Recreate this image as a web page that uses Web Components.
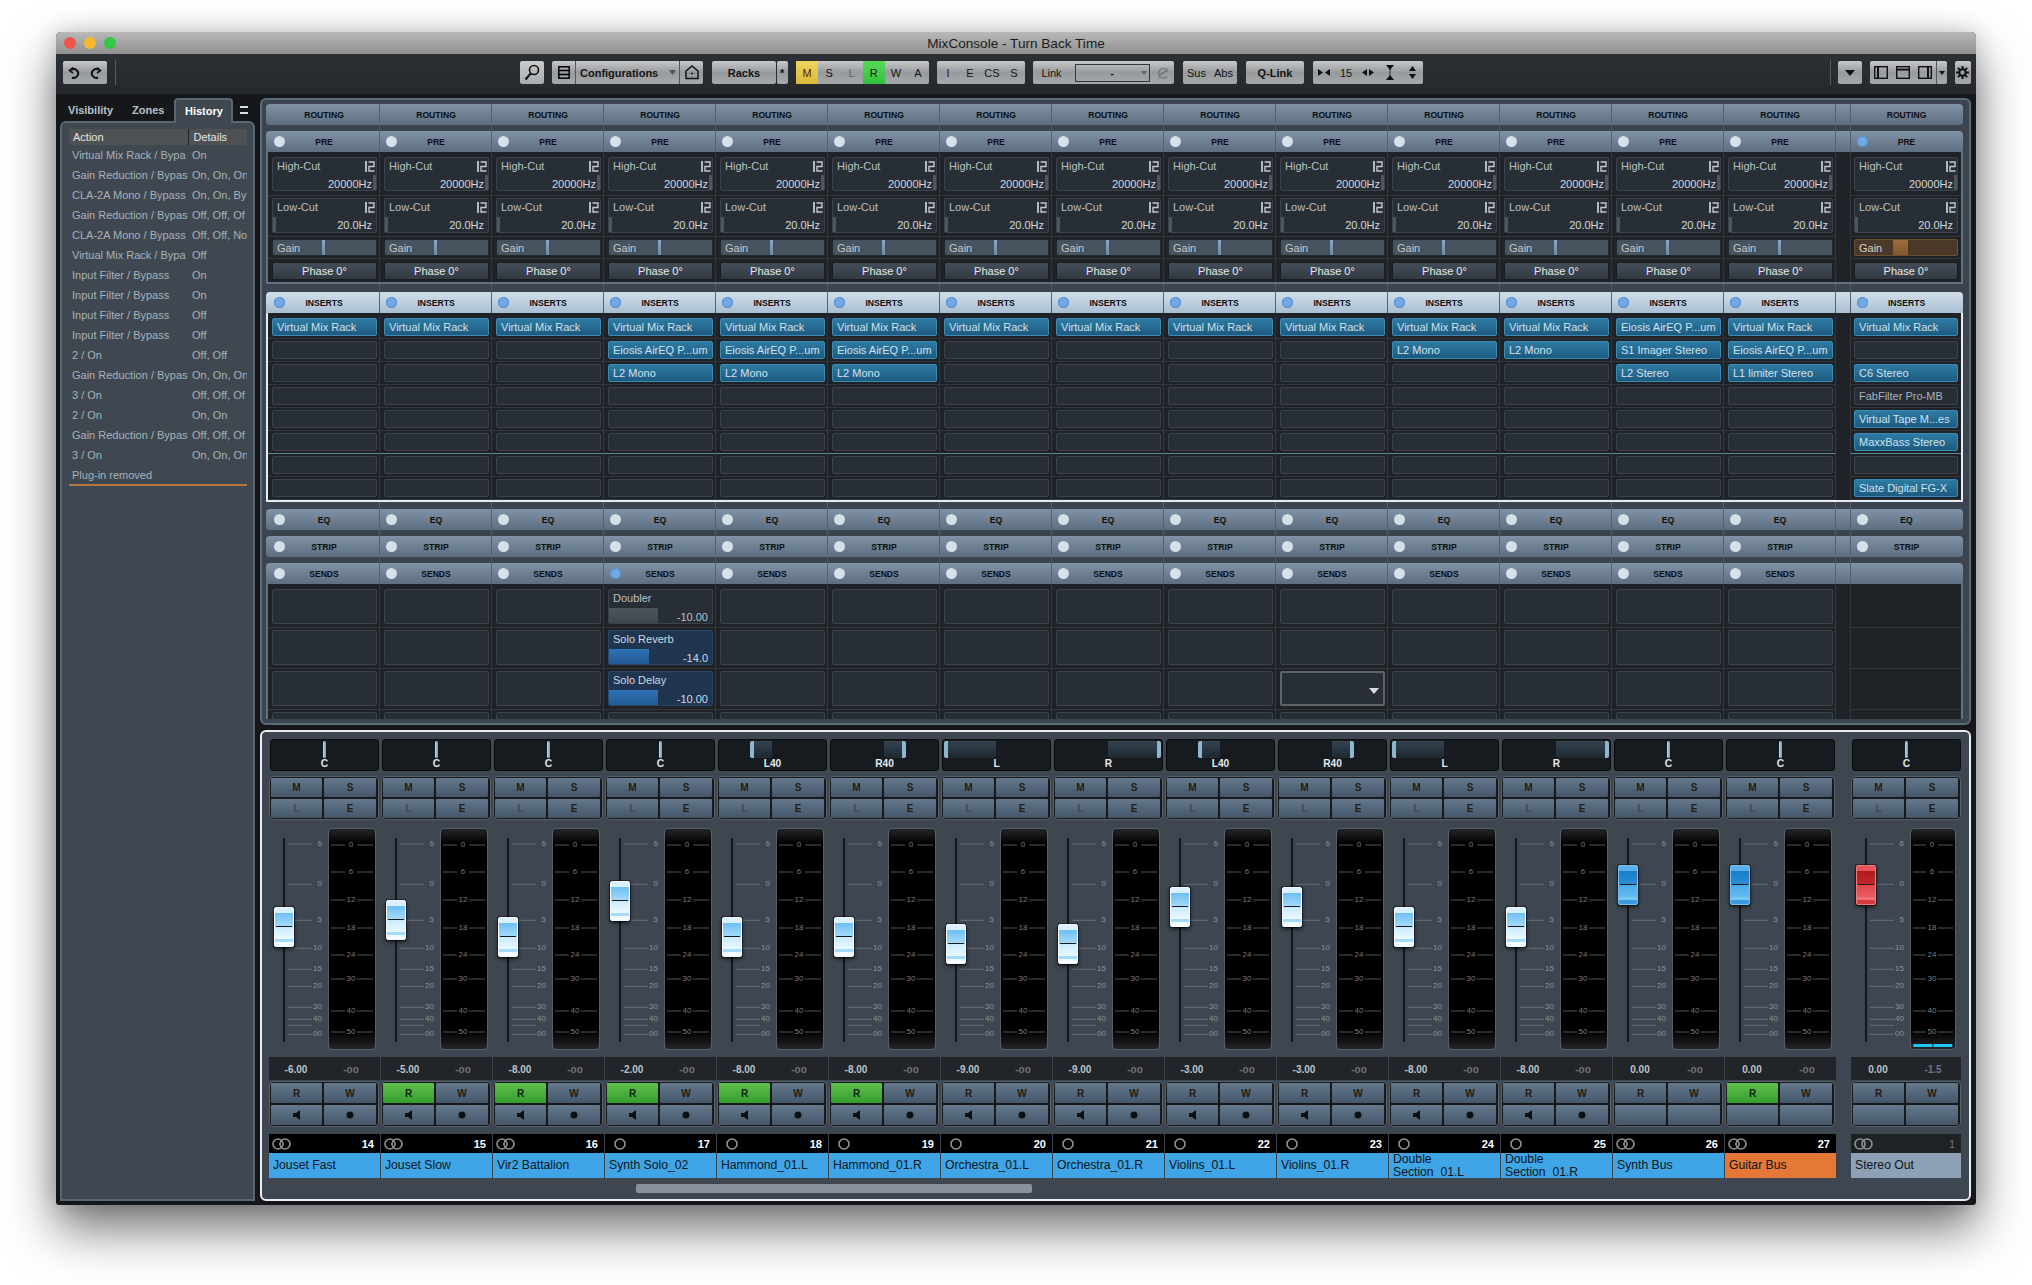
<!DOCTYPE html>
<html>
<head>
<meta charset="utf-8">
<title>MixConsole - Turn Back Time</title>
<style>
  html, body { margin: 0; height: 100%; background: #fff; overflow: hidden; }
  body { font-family: "Liberation Sans", Arial, sans-serif; padding: 32px 0 0 56px; box-sizing: border-box; }
</style>
</head>
<body>
<mix-window>
  <title-bar slot="title">MixConsole - Turn Back Time</title-bar>
  <mix-toolbar slot="toolbar"></mix-toolbar>
  <history-panel slot="side"></history-panel>
  <rack-console slot="console"></rack-console>
  <fader-console slot="console"></fader-console>
</mix-window>

<script>
const COLS = 'repeat(14, 112px) 14px 111px';

class MixWindow extends HTMLElement {
  constructor() {
    super();
    this.attachShadow({ mode: 'open' }).innerHTML = `
      <style>
        :host { display: block; width: 1920px; height: 1173px; background: #15171a; border-radius: 5px 5px 3px 3px;
                box-shadow: 0 24px 50px rgba(0,0,0,.55), 0 0 22px rgba(0,0,0,.16); }
        .main { display: flex; padding-top: 4px; }
        .side { margin-left: 4px; width: 195px; flex: none; }
        .console { margin-left: 5px; width: 1711px; flex: none; display: flex; flex-direction: column; gap: 5px; }
      </style>
      <slot name="title"></slot>
      <slot name="toolbar"></slot>
      <div class="main">
        <div class="side"><slot name="side"></slot></div>
        <div class="console"><slot name="console"></slot></div>
      </div>`;
  }
}

class TitleBar extends HTMLElement {
  constructor() {
    super();
    this.attachShadow({ mode: 'open' }).innerHTML = `
      <style>
        :host { display: flex; position: relative; height: 22px; align-items: center; justify-content: center;
                background: linear-gradient(#b9bab8, #8f908f); border-radius: 5px 5px 0 0;
                font-size: 13.6px; color: #1b1b1b; }
        .lights { position: absolute; left: 8px; top: 5px; display: flex; gap: 8px; }
        .lights i { width: 12px; height: 12px; border-radius: 50%; }
      </style>
      <div class="lights">
        <i style="background:#f0544c"></i><i style="background:#f5b82e"></i><i style="background:#33c748"></i>
      </div>
      <slot></slot>`;
  }
}

class MixToolbar extends HTMLElement {
  constructor() {
    super();
    const arrow = '<svg width="7" height="5" viewBox="0 0 7 5"><path d="M0 0h7L3.5 5z" fill="#555"/></svg>';
    this.attachShadow({ mode: 'open' }).innerHTML = `
      <style>
        :host { display: flex; height: 40px; box-sizing: border-box; padding-top: 7px; align-items: flex-start;
                background: linear-gradient(#2b3035, #25292d); font-size: 11px; color: #141414; }
        .g { display: flex; height: 23px; align-items: center; flex: none; border-radius: 2px;
             background: linear-gradient(#c6c8ca, #989b9e 50%, #a6a9ab); }
        .g > span { display: flex; align-items: center; justify-content: center; height: 100%; flex: none; }
        .b { font-weight: bold; }
        .div { width: 1px; height: 25px; margin-top: -1px; background: #555b60; flex: none; }
        .dim { color: #5f6164; }
        .sep { border-left: 1px solid #55585b; box-sizing: border-box; }
        .field { width: 75px; height: 18px; box-sizing: border-box; margin-left: 8px; border: 1px solid #33363a;
                 display: flex; align-items: center; justify-content: center; position: relative; font-weight: bold; flex: none; }
        .field svg { position: absolute; right: 2px; top: 6px; }
      </style>
      <div class="g" style="margin-left:6.5px;width:44.5px">
        <span style="width:22px"><svg width="14" height="14" viewBox="0 0 14 14" fill="none" stroke="#111" stroke-width="2"><path d="M5 11.5a4.4 4.4 0 1 0-1-7.5"/><path d="M6 1.5 2.5 4.5 6 7" stroke-width="1.6"/></svg></span>
        <span style="width:22px"><svg width="14" height="14" viewBox="0 0 14 14" fill="none" stroke="#111" stroke-width="2"><path d="M9 11.5a4.4 4.4 0 1 1 1-7.5"/><path d="M8 1.5 11.5 4.5 8 7" stroke-width="1.6"/></svg></span>
      </div>
      <div class="div" style="margin-left:8px"></div>
      <div class="g" style="margin-left:404px;width:24px;background:linear-gradient(#c9cbcd,#a9acae)">
        <span style="width:24px"><svg width="16" height="17" viewBox="0 0 16 17" fill="none" stroke="#111"><circle cx="10" cy="6" r="4.5" stroke-width="1.6"/><path d="M6.6 9.6 1.5 15.5" stroke-width="2.2"/></svg></span>
      </div>
      <div class="g" style="margin-left:8px;width:151px">
        <span style="width:23px"><svg width="12" height="13" viewBox="0 0 12 13" fill="none" stroke="#000" stroke-width="1.5"><rect x=".8" y=".8" width="10.4" height="11.4"/><path d="M1 4.5h10M1 8.5h10"/></svg></span>
        <span class="b sep" style="width:104px;justify-content:flex-start;padding-left:4px">Configurations<span style="margin-left:auto;margin-right:3px;display:flex">${arrow}</span></span>
        <span class="sep" style="width:24px"><svg width="14" height="15" viewBox="0 0 14 15" fill="none" stroke="#111" stroke-width="1.5"><path d="M1 13.5V6l6-5 6 5v7.5z"/><circle cx="7" cy="8.5" r="1" fill="#111" stroke="none"/><path d="M4 8.5h.6M9.4 8.5h.6M7 11.5v.6" stroke-width="1"/></svg></span>
      </div>
      <div class="g b" style="margin-left:9px;width:64px"><span style="width:64px">Racks</span></div>
      <div class="g b" style="margin-left:1px;width:10.5px"><span style="width:10.5px">*</span></div>
      <div class="g" style="margin-left:8.5px;width:133px">
        <span style="width:22.2px;background:linear-gradient(#edd45e,#d9b93a);color:#5a1a00">M</span>
        <span style="width:22.2px">S</span>
        <span style="width:22.2px" class="dim">L</span>
        <span style="width:22.2px;background:linear-gradient(#58d858,#32c23c)">R</span>
        <span style="width:22.2px">W</span>
        <span style="width:22px">A</span>
      </div>
      <div class="g" style="margin-left:8px;width:88px">
        <span style="width:22px">I</span><span style="width:22px">E</span><span style="width:22px">CS</span><span style="width:22px">S</span>
      </div>
      <div class="g" style="margin-left:8px;width:141px">
        <span style="width:37px;margin-right:-3.5px">Link</span>
        <div class="field">-<svg width="6" height="4" viewBox="0 0 6 4"><path d="M0 0h6L3 4z" fill="#666"/></svg></div>
        <span style="width:26px"><svg width="14" height="14" viewBox="0 0 14 14" fill="none" stroke="#77797c" stroke-width="1.4"><path d="M2.5 8.6 11.6 5a4.8 4.8 0 1 0-.6 5.5"/><path d="M2 13 12.5 1" stroke-width="1"/></svg></span>
      </div>
      <div class="g" style="margin-left:9px;width:54px">
        <span style="width:27px">Sus</span><span style="width:27px">Abs</span>
      </div>
      <div class="g b" style="margin-left:9px;width:58px"><span style="width:58px">Q-Link</span></div>
      <div class="g" style="margin-left:9px;width:110px">
        <span style="width:22px"><svg width="12" height="7" viewBox="0 0 12 7" fill="#111"><path d="M0 0l5 3.5L0 7zM12 0 7 3.5 12 7z"/></svg></span>
        <span style="width:22px">15</span>
        <span style="width:22px"><svg width="12" height="7" viewBox="0 0 12 7" fill="#111"><path d="M5 0 0 3.5 5 7zM7 0l5 3.5L7 7z"/></svg></span>
        <span style="width:22px"><svg width="8" height="15" viewBox="0 0 8 15" fill="#111"><path d="M0 0h8L4 5zM0 15h8l-4-5z"/><path d="M3.6 4h.8v7h-.8z"/></svg></span>
        <span style="width:22px"><svg width="7" height="13" viewBox="0 0 7 13" fill="#111"><path d="M3.5 0 7 5H0zM3.5 13 0 8h7z"/></svg></span>
      </div>
      <div class="div" style="margin-left:406.6px"></div>
      <div class="g" style="margin-left:7px;width:24px"><span style="width:24px"><svg width="10" height="6" viewBox="0 0 10 6"><path d="M0 0h10L5 6z" fill="#111"/></svg></span></div>
      <div class="g" style="margin-left:8px;width:77px">
        <span style="width:22px"><svg width="14" height="13" viewBox="0 0 14 13" fill="none" stroke="#111" stroke-width="1.4"><rect x=".7" y=".7" width="12.6" height="11.6"/><path d="M4 1v11" stroke-width="2"/></svg></span>
        <span style="width:22px"><svg width="14" height="13" viewBox="0 0 14 13" fill="none" stroke="#111" stroke-width="1.4"><rect x=".7" y=".7" width="12.6" height="11.6"/><path d="M1 3.6h12" stroke-width="2"/></svg></span>
        <span style="width:22px"><svg width="14" height="13" viewBox="0 0 14 13" fill="none" stroke="#111" stroke-width="1.4"><rect x=".7" y=".7" width="12.6" height="11.6"/><path d="M10 1v11" stroke-width="2"/></svg></span>
        <span class="sep" style="width:11px"><svg width="6" height="4" viewBox="0 0 6 4"><path d="M0 0h6L3 4z" fill="#111"/></svg></span>
      </div>
      <div class="g" style="margin-left:8.5px;width:15.5px"><span style="width:15.5px"><svg width="13" height="13" viewBox="0 0 13 13" fill="none" stroke="#111"><circle cx="6.5" cy="6.5" r="3.2" stroke-width="2"/><path d="M6.5 0v3M6.5 10v3M0 6.5h3M10 6.5h3M1.9 1.9 4 4M9 9l2.1 2.1M1.9 11.1 4 9M9 4l2.1-2.1" stroke-width="2"/></svg></span></div>`;
  }
}

class HistoryPanel extends HTMLElement {
  constructor() {
    super();
    // the two columns are clipped in the window, so only what shows is listed
    const rows = [
      ['Virtual Mix Rack / Bypa', 'On'], ['Gain Reduction / Bypas', 'On, On, On'],
      ['CLA-2A Mono / Bypass', 'On, On, By'], ['Gain Reduction / Bypas', 'Off, Off, Of'],
      ['CLA-2A Mono / Bypass', 'Off, Off, No'], ['Virtual Mix Rack / Bypa', 'Off'],
      ['Input Filter / Bypass', 'On'], ['Input Filter / Bypass', 'On'],
      ['Input Filter / Bypass', 'Off'], ['Input Filter / Bypass', 'Off'],
      ['2 / On', 'Off, Off'], ['Gain Reduction / Bypas', 'On, On, On'],
      ['3 / On', 'Off, Off, Of'], ['2 / On', 'On, On'],
      ['Gain Reduction / Bypas', 'Off, Off, Of'], ['3 / On', 'On, On, On'],
      ['Plug-in removed', '']
    ];
    const html = rows.map(r => `<div class="row"><span>${r[0]}</span><span>${r[1]}</span></div>`).join('');
    this.attachShadow({ mode: 'open' }).innerHTML = `
      <style>
        :host { display: block; font-size: 11px; color: #a9b1b9; }
        .tabs { display: flex; height: 23px; align-items: center; font-weight: bold; color: #b9c1c8; position: relative; z-index: 1; }
        .tabs span { flex: none; }
        .hist { width: 59px; height: 25px; margin: 0 0 -2px 10px; padding-bottom: 2px; align-self: flex-start; box-sizing: border-box; background: #3f4851; color: #fff;
                border: 2px solid #5a6670; border-bottom: 0; border-radius: 4px 4px 0 0; display: flex; align-items: center; justify-content: center; }
        .menu { width: 8px; height: 4px; margin-left: 7px; border: solid #d8dde1; border-width: 2px 0; }
        .panel { height: 1080px; box-sizing: border-box; background: #3f4851; border: 2px solid #5a6670; border-radius: 6px 6px 0 0; padding: 6px 6px 0 7px; }
        .head { display: grid; grid-template-columns: 118.5px 1fr; height: 16px; background: #4f5254; color: #e6e6e6; align-items: center; }
        .head span { padding-left: 4px; height: 100%; display: flex; align-items: center; }
        .head span + span { border-left: 1.5px solid #22262a; padding-left: 5px; }
        .row { display: grid; grid-template-columns: 120px 58px; height: 20px; align-items: center; white-space: nowrap; }
        .row span { overflow: hidden; padding-left: 3px; }
        .end { height: 2px; margin-top: -1px; background: #b3793f; }
      </style>
      <div class="tabs">
        <span style="margin-left:8px">Visibility</span>
        <span style="margin-left:19px">Zones</span>
        <span class="hist">History</span>
        <span class="menu"></span>
      </div>
      <div class="panel">
        <div class="head"><span>Action</span><span>Details</span></div>
        ${html}
        <div class="end"></div>
      </div>`;
  }
}

class RackCell extends HTMLElement {
  constructor() {
    super();
    this.attachShadow({ mode: 'open' }).innerHTML = `
      <style>
        :host { display: block; box-sizing: border-box; padding: var(--t, 2px) 2px var(--b, 2px) 4px;
                border-right: 1px solid #31373d; border-bottom: 1px solid var(--sep, #31373d); min-width: 0; }
        :host([out]) { grid-column: 16; padding-left: 3px; padding-right: 3px; border-right: 0; border-left: 1px solid #31373d; }
      </style>
      <slot></slot>`;
  }
}

class RackSection extends HTMLElement {
  connectedCallback() {
    const a = n => this.getAttribute(n);
    const label = a('label');
    const leds = a('led');
    const active = (a('active') || '').split(',');
    let head = '';
    let rail = '';
    for (let i = 0; i < 15; i++) {
      const out = i === 14;
      const on = active.includes(String(i)) ? ' on' : '';
      const led = leds !== null && !(out && a('noout') !== null) ? `<i class="led${on}"></i>` : '';
      const txt = out && a('noout') !== null ? '' : label;
      head += `<div class="hc${out ? ' o' : ''}">${led}<b>${txt}</b></div>`;
      rail += `<div class="rc${out ? ' o' : ''}"></div>`;
    }
    const hasBody = this.children.length > 0;
    this.attachShadow({ mode: 'open' }).innerHTML = `
      <style>
        :host { display: block; font-size: 11px; }
        .rail, .head, .body { display: grid; grid-template-columns: ${COLS}; }
        .rail { height: ${a('gap') || 0}px; padding: 0 2px; }
        .rc { border-right: 1px solid #505b66; }
        .rc.o { grid-column: 16; border-right: 0; border-left: 1px solid #505b66; }
        .head { height: 21px; padding: 0 2px; border-radius: ${hasBody ? '4px 4px 0 0' : '4px'};
                background: ${a('tone') === 'light' ? 'linear-gradient(#d2deea,#aabfd3)' : 'linear-gradient(#8092a5,#5d6e80)'}; }
        .hc { position: relative; display: flex; align-items: center; justify-content: center; border-right: 1px solid #53616f; padding-left: 1px; }
        .hc.o { grid-column: 16; border-right: 0; border-left: 1px solid #53616f; }
        .hc b { font-size: 8.6px; color: #0b0d10; }
        .led { position: absolute; left: 6px; top: 4.5px; width: 11px; height: 11px; border-radius: 50%; background: #d6e0e9; }
        .led.on { background: #6fa9e8; box-shadow: inset 0 0 0 1px #5c8fc6; }
        .body { background: #1f2327; border: solid ${a('rim') || '#62727f'}; border-width: 0 2px 2px; ${a('bodystyle') || ''} }
      </style>
      <div class="rail">${a('gap') ? rail : ''}</div>
      <div class="head">${head}</div>
      ${hasBody ? '<div class="body"><slot></slot></div>' : ''}`;
  }
}

class FilterBox extends HTMLElement {
  connectedCallback() {
    const low = this.getAttribute('kind') === 'low';
    const pos = low ? 'left' : 'right';
    this.attachShadow({ mode: 'open' }).innerHTML = `
      <style>
        :host { display: flex; flex-direction: column; justify-content: space-between; box-sizing: border-box;
                height: ${low ? 35 : 34}px; border: 1px solid #3b444e; border-radius: 2px; padding: 2px 4px ${low ? 1 : 0}px 4px; color: #b9c0c7;
                background: linear-gradient(#4b5661, #4b5661) no-repeat ${pos} bottom / 3px 15px, #282e36; }
        .top { display: flex; justify-content: space-between; align-items: center; }
        .top svg { margin-right: -3px; }
        .v { text-align: right; color: #d3d8dc; }
      </style>
      <div class="top"><span>${low ? 'Low-Cut' : 'High-Cut'}</span>
        <svg width="10" height="11" viewBox="0 0 10 11" fill="none" stroke="#c2c9cf" stroke-width="1.4"><path d="M1 0v11" stroke-width="1.8"/><path d="M3.5 1H9v4.5H4V10h5.5"/></svg></div>
      <div class="v">${low ? '20.0Hz' : '20000Hz'}</div>`;
  }
}

class GainBox extends HTMLElement {
  connectedCallback() {
    const hot = this.hasAttribute('hot');
    this.attachShadow({ mode: 'open' }).innerHTML = `
      <style>
        :host { display: flex; align-items: center; box-sizing: border-box; height: 17px; padding-left: 4px;
                border: 1px solid ${hot ? '#6b4f32' : '#22282e'}; border-radius: 2px; color: ${hot ? '#d9d2c8' : '#c0c7ce'};
                background: ${hot
                  ? 'linear-gradient(#9c6c3a,#85592e) no-repeat 38px 0 / 15px 100%, #4a3829'
                  : 'linear-gradient(#84a6c0,#6c8ea8) no-repeat 49px 0 / 3px 100%, #47535e'}; }
      </style><span>Gain</span>`;
  }
}

class PhaseBox extends HTMLElement {
  constructor() {
    super();
    this.attachShadow({ mode: 'open' }).innerHTML = `
      <style>
        :host { display: flex; align-items: center; justify-content: center; height: 18px; border-radius: 2px; color: #e6eaee;
                box-sizing: border-box; border: 1px solid #191c1f; background: linear-gradient(#434d58, #323a43); }
      </style><span>Phase 0°</span>`;
  }
}

class InsertSlot extends HTMLElement {
  connectedCallback() {
    const on = this.hasAttribute('on');
    this.attachShadow({ mode: 'open' }).innerHTML = `
      <style>
        :host { display: flex; align-items: center; box-sizing: border-box; height: 18px; padding-left: 4px; border-radius: 2px;
                white-space: nowrap; overflow: hidden; border: 1px solid ${on ? '#3a8ab4' : '#3b444e'};
                color: ${on ? '#cfe2ee' : '#aab2ba'};
                background: ${on ? 'linear-gradient(#2e7ba3,#1d5a80)' : '#282e36'}; }
      </style><slot></slot>`;
  }
}

class SendSlot extends HTMLElement {
  connectedCallback() {
    const a = n => this.getAttribute(n);
    const fill = a('fill');
    const blue = a('tone') === 'blue';
    const bg = !fill ? '#282e36' : blue
      ? `linear-gradient(#2f72b6,#235a94) no-repeat left bottom / ${fill}px 15px, #1f3550`
      : `linear-gradient(#4d555d,#3d454d) no-repeat left bottom / ${fill}px 15px, #282e36`;
    const selected = this.hasAttribute('selected');
    this.attachShadow({ mode: 'open' }).innerHTML = `
      <style>
        :host { display: flex; flex-direction: column; justify-content: space-between; box-sizing: border-box; height: 35px;
                border: ${selected ? '2px solid #5d656b' : `1px solid ${blue ? '#2b4767' : '#3b444e'}`}; border-radius: 2px;
                padding: 2px 4px 0 4px; color: ${blue ? '#cfd9e2' : '#b9c0c7'}; background: ${bg}; position: relative; }
        .v { text-align: right; }
        svg { position: absolute; right: 4px; top: 15px; }
      </style>
      <div>${a('name') || ''}</div><div class="v">${a('value') || ''}</div>
      ${selected ? '<svg width="10" height="6" viewBox="0 0 10 6"><path d="M0 0h10L5 6z" fill="#d8dadc"/></svg>' : ''}`;
  }
}

class RackConsole extends HTMLElement {
  constructor() {
    super();
    const VMR = 'Virtual Mix Rack', AIR = 'Eiosis AirEQ P...um', L2 = 'L2 Mono';
    const inserts = [
      [VMR], [VMR], [VMR], [VMR, AIR, L2], [VMR, AIR, L2], [VMR, AIR, L2], [VMR], [VMR], [VMR], [VMR],
      [VMR, L2], [VMR, L2], [AIR, 'S1 Imager Stereo', 'L2 Stereo'], [VMR, AIR, 'L1 limiter Stereo'],
      [VMR, '', 'C6 Stereo', '-FabFilter Pro-MB', 'Virtual Tape M...es', 'MaxxBass Stereo', '', 'Slate Digital FG-X']
    ];
    const row = (fn, t, b, extra = () => '') => {
      let s = '';
      for (let i = 0; i < 15; i++) {
        s += `<rack-cell ${i === 14 ? 'out' : ''} style="--t:${t}px;--b:${b}px;${extra(i)}">${fn(i)}</rack-cell>`;
      }
      return s;
    };
    const preBody = row(() => '<filter-box></filter-box>', 5, 4)
      + row(() => '<filter-box kind="low"></filter-box>', 2, 3)
      + row(i => `<gain-box ${i === 14 ? 'hot' : ''}></gain-box>`, 2, 2)
      + row(() => '<phase-box></phase-box>', 3, 1, () => '--sep:transparent');
    let insBody = '';
    for (let r = 0; r < 8; r++) {
      insBody += row(i => {
        const v = inserts[i][r] || '';
        if (v[0] === '-') return `<insert-slot>${v.slice(1)}</insert-slot>`;
        return v ? `<insert-slot on>${v}</insert-slot>` : '<insert-slot></insert-slot>';
      }, 2, 2, () => r === 5 ? '--sep:#5b8a99' : '');
    }
    const sends = (r, t, b) => row(i => {
      if (i === 14) return '';
      if (i === 3 && r === 0) return '<send-slot name="Doubler" value="-10.00" fill="49"></send-slot>';
      if (i === 3 && r === 1) return '<send-slot name="Solo Reverb" value="-14.0" fill="40" tone="blue"></send-slot>';
      if (i === 3 && r === 2) return '<send-slot name="Solo Delay" value="-10.00" fill="49" tone="blue"></send-slot>';
      if (i === 9 && r === 2) return '<send-slot selected></send-slot>';
      return '<send-slot></send-slot>';
    }, t, b);
    this.attachShadow({ mode: 'open' }).innerHTML = `
      <style>
        :host { display: block; height: 627px; box-sizing: border-box; background: #3c454f; border: 2px solid #5c6b78;
                border-radius: 6px; padding: 4px 6px 4px 4px; overflow: hidden; }
      </style>
      <rack-section label="ROUTING"></rack-section>
      <rack-section label="PRE" led active="14" gap="6">${preBody}</rack-section>
      <rack-section label="INSERTS" led tone="light" active="0,1,2,3,4,5,6,7,8,9,10,11,12,13,14" gap="8" rim="#e4ebf2" bodystyle="padding-top:3px">${insBody}</rack-section>
      <rack-section label="EQ" led gap="7"></rack-section>
      <rack-section label="STRIP" led gap="6"></rack-section>
      <rack-section label="SENDS" led noout active="3" gap="6" bodystyle="border-bottom:0;height:135px;overflow:hidden;grid-auto-rows:max-content">
        ${sends(0, 5, 3)}${sends(1, 2, 3)}${sends(2, 2, 3)}${sends(3, 2, 0)}
      </rack-section>`;
  }
}

class PanBox extends HTMLElement {
  connectedCallback() {
    const label = this.getAttribute('label');
    const spec = {
      C:   [51.5, 3.5, ''],
      L40: [31, 22, 'border-left:4px solid #8fb6cf'],
      R40: [53, 22, 'border-right:4px solid #8fb6cf'],
      L:   [1, 52, 'border-left:4px solid #8fb6cf'],
      R:   [53, 53, 'border-right:4px solid #8fb6cf']
    }[label];
    const fill = label === 'C' ? 'linear-gradient(90deg,#c0d9e8,#6f9ab6)' : 'linear-gradient(#33434f,#1d2830)';
    this.attachShadow({ mode: 'open' }).innerHTML = `
      <style>
        :host { display: block; box-sizing: border-box; width: 109px; height: 32px; margin-left: 1px; background: #171b1f;
                border: 1px solid #0b0c0d; border-radius: 3px; color: #e3e9ee; }
        .t { height: 17px; margin: 1px 0 0 ${spec[0]}px; width: ${spec[1]}px; box-sizing: border-box; border-radius: 2px; background: ${fill}; ${spec[2]} }
        .l { text-align: center; font-size: 10.2px; font-weight: bold; line-height: 12px; }
      </style>
      <div class="t"></div><div class="l">${label}</div>`;
  }
}

class BtnQuad extends HTMLElement {
  connectedCallback() {
    const h = this.getAttribute('h') || 19;
    const labels = this.getAttribute('labels').split(',');
    const green = this.hasAttribute('green');
    const cells = labels.map((t, i) => {
      let c = i === 0 && green ? 'c g' : 'c';
      if (t === 'L') c += ' dim';
      let body = t;
      if (t === 'spk') body = '<svg width="7" height="10" viewBox="0 0 7 10"><path d="M0 3h3l4-3v10L3 7H0z" fill="#0e0f10"/></svg>';
      if (t === 'dot') body = '<svg width="8" height="8" viewBox="0 0 8 8"><circle cx="4" cy="4" r="3.5" fill="#0e0f10"/></svg>';
      if (t === '-') body = '';
      return `<div class="${c}">${body}</div>`;
    }).join('');
    this.attachShadow({ mode: 'open' }).innerHTML = `
      <style>
        :host { display: grid; grid-template-columns: 51px 52px; grid-auto-rows: ${h}px; gap: 2px; box-sizing: border-box; width: 110px;
                padding: 1px 1px 1px 1px; border: 1px solid #566069; border-radius: 5px; background: #17191c; }
        .c { display: flex; align-items: center; justify-content: center; font-size: 10px; font-weight: bold; color: #241b12;
             background: linear-gradient(#65788c, #455669); border-radius: 1px; }
        .c.g { background: linear-gradient(#5fc24e, #359d2e); color: #10240c; }
        .c.dim { color: #3c4957; }
      </style>${cells}`;
  }
}

class FaderScale extends HTMLElement {
  connectedCallback() {
    const marks = [['6',16],['0',56.3],['5',92.3],['10',120.3],['15',141.3],['20',158.3],['30',179.3],['40',191.3],['',197.3],['00',206.3]];
    const drawn = marks.map(([t, y]) =>
      `<path d="M19 ${y}H43" stroke="#67717a"/>` + (t ? `<text x="53" y="${y + 2}" text-anchor="end">${t}</text>` : '')).join('');
    this.attachShadow({ mode: 'open' }).innerHTML = `
      <style>
        :host { display: block; width: 59px; height: 222px; flex: none; }
        svg { display: block; }
        text { font: 8px "Liberation Sans", Arial, sans-serif; fill: #8a939b; }
      </style>
      <svg width="59" height="222" viewBox="0 0 59 222">
        <rect x="14" y="10" width="2" height="204" fill="#14171a"/>
        ${drawn}
      </svg>`;
  }
}

class FaderCap extends HTMLElement {
  connectedCallback() {
    const tones = {
      light: ['#d9f1fe', '#6fc0f2', '#a8dcfa', '#c8eafc', '#ecf9ff', '#a4dbf9', '#f4fbff', '#f2f8fc'],
      blue:  ['#59aeec', '#1c7ec6', '#2a8fd8', '#4ba8ea', '#66bcf3', '#78c6f6', '#3c9be0', '#7cc2ef'],
      red:   ['#ea5458', '#ad1b1f', '#c4282b', '#e0464a', '#ea5c60', '#f07276', '#d63a3e', '#ee7a7c']
    }[this.getAttribute('tone') || 'light'];
    this.attachShadow({ mode: 'open' }).innerHTML = `
      <style>
        :host { position: absolute; left: 4.7px; top: ${this.getAttribute('top')}px; width: 20px; height: 40px; box-sizing: border-box;
                border: 1px solid ${tones[7]}; border-radius: 2px; box-shadow: 0 2px 4px rgba(0,0,0,.7), 0 0 0 1px rgba(0,0,0,.4);
                background: linear-gradient(#1a1a1a, #1a1a1a) no-repeat center / 16px 1.2px,
                            linear-gradient(${tones[0]} 0 14%, ${tones[1]} 14%, ${tones[2]} 50%, ${tones[3]} 50%, ${tones[4]} 82%, ${tones[5]} 82% 90%, ${tones[6]} 90%); }
      </style>`;
  }
}

class LevelMeter extends HTMLElement {
  connectedCallback() {
    const w = +this.getAttribute('w') || 48;
    const marks = [['0',16],['6',43],['12',71],['18',99],['24',126],['30',150],['40',182],['50',203]];
    const inner = w - 2;
    const mid = inner / 2 - 1;
    const drawn = marks.map(([t, y]) =>
      `<path d="M2 ${y}H${mid - 6}M${mid + 6} ${y}H${inner - 2}" stroke="#555"/><text x="${mid}" y="${y + 1.5}" text-anchor="middle">${t}</text>`).join('');
    const peak = this.hasAttribute('peak')
      ? `<rect x="2.3" y="215" width="19" height="3" fill="#19c8f5"/><rect x="22.3" y="215" width="19" height="3" fill="#19c8f5"/>` : '';
    this.attachShadow({ mode: 'open' }).innerHTML = `
      <style>
        :host { display: block; box-sizing: border-box; width: ${w}px; height: 222px; flex: none; border: 1px solid #555e66; border-radius: 4px;
                background: linear-gradient(#242424, #000 15px, #000 calc(100% - 18px), #262626); overflow: hidden; }
        svg { display: block; }
        text { font: 8px "Liberation Sans", Arial, sans-serif; fill: #7c7c7c; }
      </style>
      <svg width="${inner}" height="220" viewBox="0 0 ${inner} 220">${drawn}${peak}</svg>`;
  }
}

class ChannelStrip extends HTMLElement {
  connectedCallback() {
    const a = n => this.getAttribute(n);
    const out = this.hasAttribute('out');
    const stereo = a('link') === 'stereo';
    const linkIcon = stereo
      ? '<svg width="19" height="12" viewBox="0 0 19 12" fill="none" stroke="#8f9396" stroke-width="1.6"><circle cx="6" cy="6" r="5"/><circle cx="13" cy="6" r="5"/></svg>'
      : '<svg width="19" height="12" viewBox="0 0 19 12" fill="none" stroke="#8f9396" stroke-width="1.6"><circle cx="12" cy="6" r="5"/></svg>';
    const icons = this.hasAttribute('noicons') ? '-,-' : 'spk,dot';
    this.attachShadow({ mode: 'open' }).innerHTML = `
      <style>
        :host { display: block; width: ${out ? 110 : 112}px; flex: none; ${out ? 'margin-left: 14px;' : ''} }
        .fader { position: relative; display: flex; height: 222px; margin: 8px 0 7px; }
        btn-quad { margin-top: 5px; }
        .vals { display: grid; grid-template-columns: 54px 56px; height: 23px; box-sizing: border-box; padding-top: 1px; align-items: center; background: #212428;
                text-align: center; font-size: 10px; font-weight: bold; color: #bcc3ca; ${out ? '' : 'border-right: 1px solid #3b424a;'} }
        .vals span + span { color: #6e757b; }
        .rw { margin-top: 1px; }
        .tag { display: flex; justify-content: space-between; align-items: center; height: 19px; margin-top: 7px; padding: 0 6px 0 3px;
               background: ${out ? '#1f2225' : '#000'}; ${out ? '' : 'border-right: 1px solid #3b424a;'} }
        .tag b { font-size: 11px; color: ${out ? '#70777d' : '#fff'}; ${out ? 'font-weight: normal;' : ''} }
        .tag svg { display: block; }
        .name { height: 25px; box-sizing: border-box; padding-left: 4px; display: flex; align-items: center; white-space: pre-line;
                font-size: 12.2px; line-height: 12.5px; color: #0c1620; background: ${a('color')};
                ${out ? '' : 'border-right: 1px solid #3b424a;'} overflow: hidden; }
      </style>
      <pan-box label="${a('pan')}"></pan-box>
      <btn-quad labels="M,S,L,E"></btn-quad>
      <div class="fader">
        <fader-scale></fader-scale>
        <level-meter ${out ? 'w="46" peak' : ''}></level-meter>
        <fader-cap top="${a('top')}" tone="${a('tone') || 'light'}"></fader-cap>
      </div>
      <div class="vals"><span>${a('gain')}</span><span>${a('peak') || '-oo'}</span></div>
      <btn-quad class="rw" h="20" labels="R,W,${icons}" ${this.hasAttribute('green') ? 'green' : ''}></btn-quad>
      <div class="tag">${linkIcon}<b>${a('num')}</b></div>
      <div class="name">${a('name')}</div>`;
  }
}

class FaderConsole extends HTMLElement {
  constructor() {
    super();
    const blue = '#3fa5e7';
    const strips = [
      ['Jouset Fast', 14, 'C', '-6.00', 926.6, 0, 'stereo'],
      ['Jouset Slow', 15, 'C', '-5.00', 920, 1, 'stereo'],
      ['Vir2 Battalion', 16, 'C', '-8.00', 937, 1, 'stereo'],
      ['Synth Solo_02', 17, 'C', '-2.00', 901, 1, 'mono'],
      ['Hammond_01.L', 18, 'L40', '-8.00', 937, 1, 'mono'],
      ['Hammond_01.R', 19, 'R40', '-8.00', 937, 1, 'mono'],
      ['Orchestra_01.L', 20, 'L', '-9.00', 943.5, 0, 'mono'],
      ['Orchestra_01.R', 21, 'R', '-9.00', 943.5, 0, 'mono'],
      ['Violins_01.L', 22, 'L40', '-3.00', 907, 0, 'mono'],
      ['Violins_01.R', 23, 'R40', '-3.00', 907, 0, 'mono'],
      ['Double\nSection_01.L', 24, 'L', '-8.00', 926.6, 0, 'mono'],
      ['Double\nSection_01.R', 25, 'R', '-8.00', 926.6, 0, 'mono'],
      ['Synth Bus', 26, 'C', '0.00', 884.5, 0, 'stereo', 'blue', blue],
      ['Guitar Bus', 27, 'C', '0.00', 884.5, 1, 'stereo', 'blue', '#e57737'],
      ['Stereo Out', 1, 'C', '0.00', 884.5, 0, 'stereo', 'red', '#8fa1b6']
    ];
    const html = strips.map((s, i) => {
      const top = s[4] - 828 - 20;
      const flat = i >= 12 ? 'noicons' : '';
      const out = i === 14 ? 'out peak="-1.5"' : '';
      return `<channel-strip name="${s[0]}" num="${s[1]}" pan="${s[2]}" gain="${s[3]}" top="${top}" link="${s[6]}"
        tone="${s[7] || 'light'}" color="${s[8] || blue}" ${s[5] ? 'green' : ''} ${flat} ${out}></channel-strip>`;
    }).join('');
    this.attachShadow({ mode: 'open' }).innerHTML = `
      <style>
        :host { display: block; height: 471px; box-sizing: border-box; background: #3e4751; border: 2px solid #e9eef2;
                border-radius: 6px; padding: 7px 0 0 7px; }
        .strips { display: flex; }
        .scroll { width: 396px; height: 9px; margin: 6px 0 0 367px; border-radius: 2px; background: #8a909c; }
      </style>
      <div class="strips">${html}</div>
      <div class="scroll"></div>`;
  }
}

customElements.define('mix-window', MixWindow);
customElements.define('title-bar', TitleBar);
customElements.define('mix-toolbar', MixToolbar);
customElements.define('history-panel', HistoryPanel);
customElements.define('rack-cell', RackCell);
customElements.define('rack-section', RackSection);
customElements.define('filter-box', FilterBox);
customElements.define('gain-box', GainBox);
customElements.define('phase-box', PhaseBox);
customElements.define('insert-slot', InsertSlot);
customElements.define('send-slot', SendSlot);
customElements.define('rack-console', RackConsole);
customElements.define('pan-box', PanBox);
customElements.define('btn-quad', BtnQuad);
customElements.define('fader-scale', FaderScale);
customElements.define('fader-cap', FaderCap);
customElements.define('level-meter', LevelMeter);
customElements.define('channel-strip', ChannelStrip);
customElements.define('fader-console', FaderConsole);
</script>
</body>
</html>
